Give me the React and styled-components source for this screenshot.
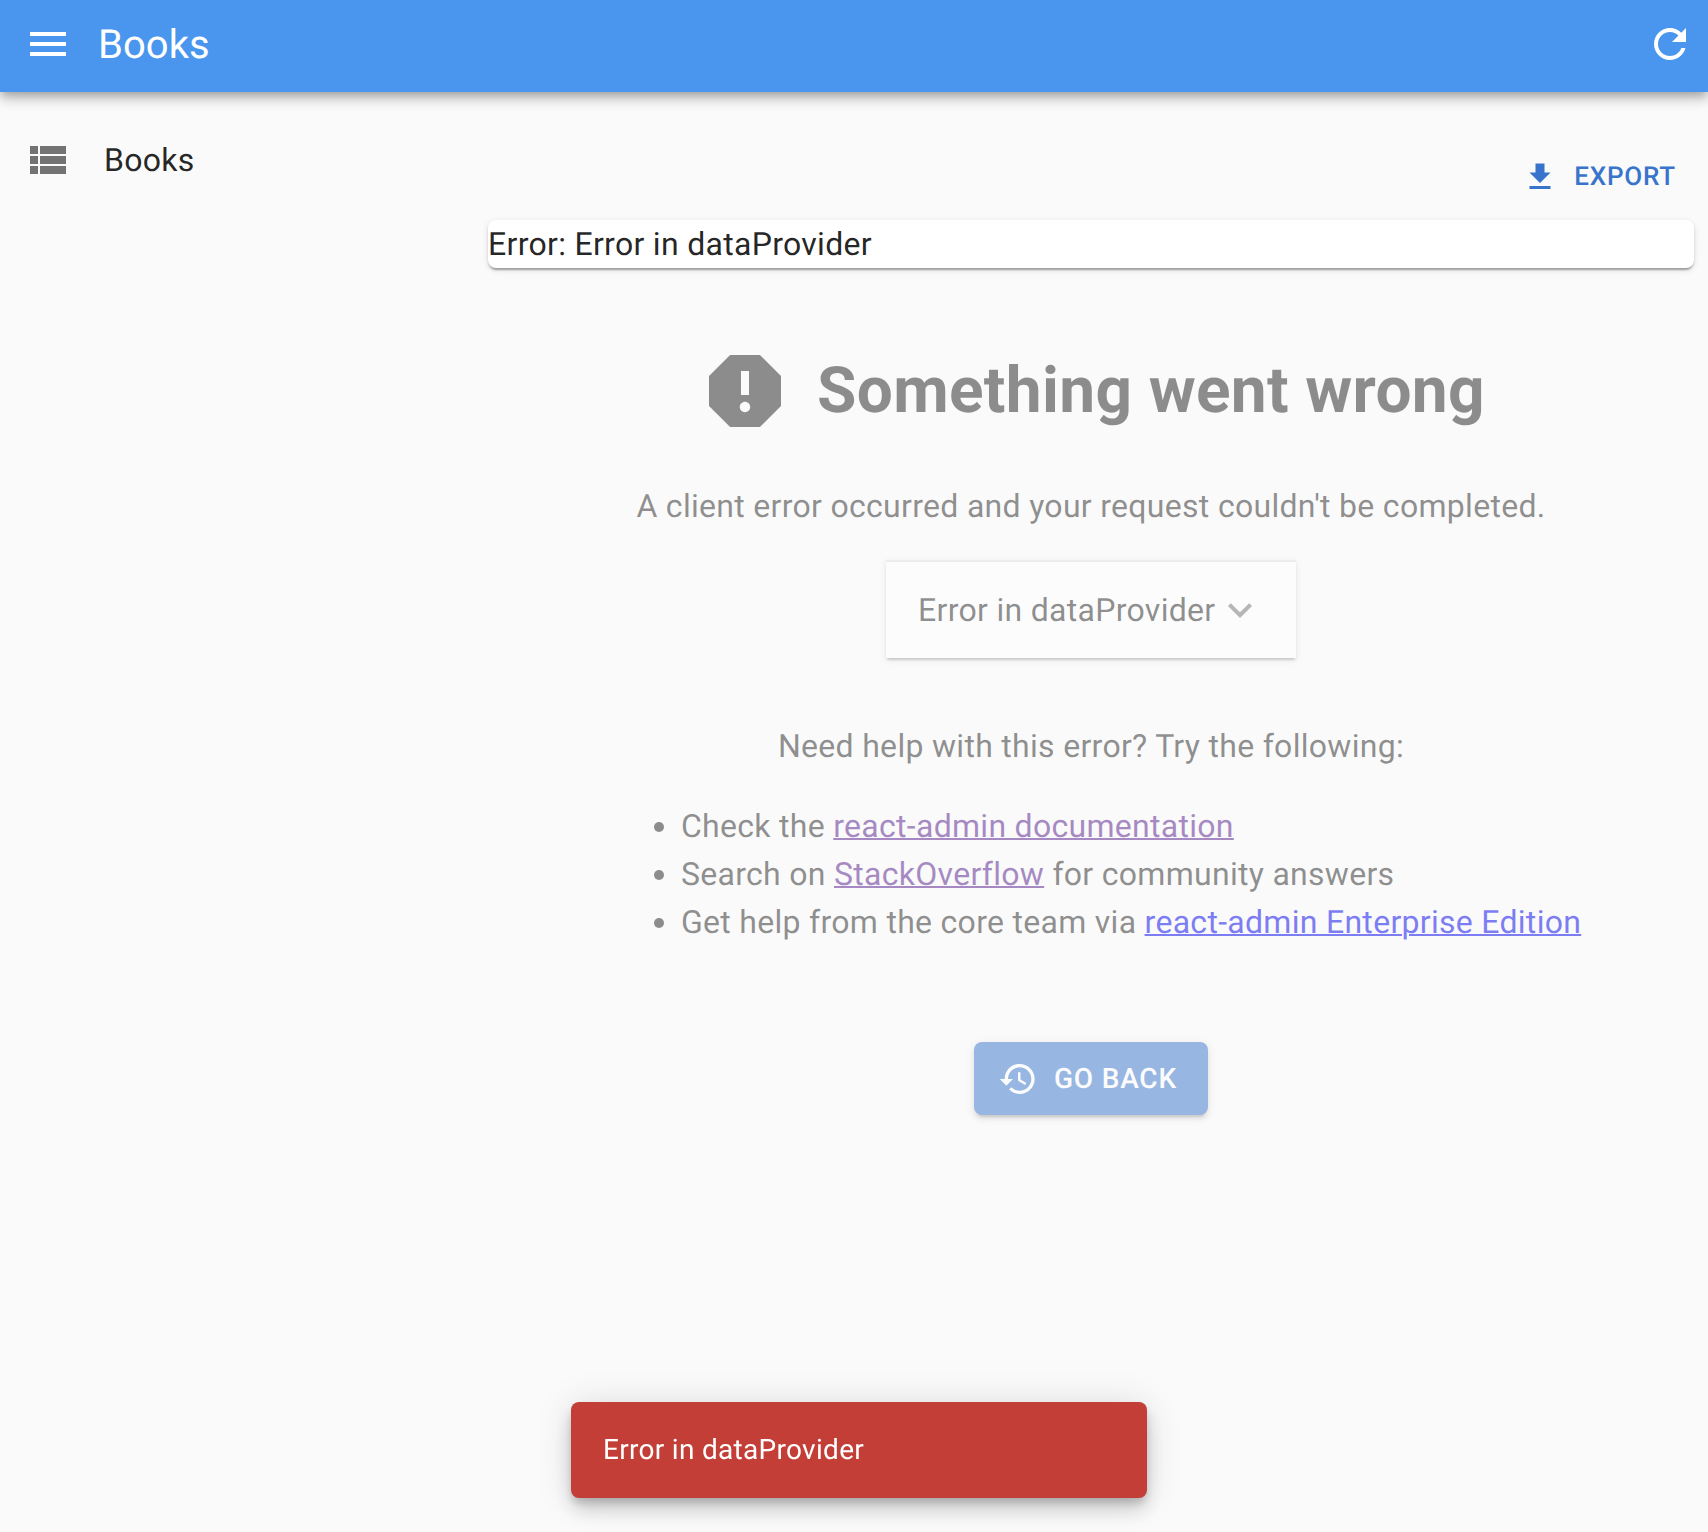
import React from "react";
import styled, { createGlobalStyle } from "styled-components";

const Global = createGlobalStyle`
  html, body { margin: 0; padding: 0; background: #fafafa; }
  body { font-family: Roboto, "Liberation Sans", sans-serif; color: rgba(0,0,0,.87); text-rendering: geometricPrecision; }
  * { box-sizing: border-box; }
`;

const Page = styled.div`
  height: 1532px;
  background: #fafafa;
  display: flex;
  flex-direction: column;
  overflow: hidden;
`;

const Header = styled.header`
  height: 92px;
  flex: none;
  display: flex;
  align-items: flex-start;
  padding: 20px 14px 0 24px;
  background: #4a96ee;
  color: #fff;
  box-shadow: 0 4px 8px -2px rgba(0,0,0,.2), 0 8px 10px 0 rgba(0,0,0,.14), 0 2px 20px 0 rgba(0,0,0,.12);
  position: relative;
  z-index: 2;
`;

const Icon = styled.svg`
  display: block;
  flex: none;
  width: ${(p) => p.$size || 48}px;
  height: ${(p) => p.$size || 48}px;
  fill: ${(p) => p.$color || "currentColor"};
`;

const Title = styled.div`
  flex: 1;
  margin-left: 26px;
  padding-top: 1px;
  font-size: 40px;
  line-height: 48px;
  font-weight: 400;
  letter-spacing: 0.05px;
`;

const Body = styled.div`
  flex: 1;
  display: flex;
  min-height: 0;
`;

const Sidebar = styled.nav`
  width: 488px;
  flex: none;
  padding-top: 44px;
`;

const MenuItem = styled.div`
  display: flex;
  align-items: center;
  height: 48px;
  padding-left: 24px;
  gap: 32px;
  font-size: 32px;
  letter-spacing: 0.3px;
  color: rgba(0,0,0,.87);
`;

const Content = styled.main`
  flex: 1;
  min-width: 0;
  padding-right: 14px;
`;

const Actions = styled.div`
  height: 128px;
  display: flex;
  justify-content: flex-end;
  align-items: flex-start;
  padding: 67px 18px 0 0;
`;

const ExportButton = styled.div`
  display: flex;
  align-items: center;
  gap: 16px;
  color: #3874cc;
  font-size: 26px;
  font-weight: 500;
  line-height: 36px;
  letter-spacing: 0.8px;
`;

const ErrorBar = styled.div`
  height: 48px;
  background: #fff;
  border-radius: 8px;
  font-size: 32px;
  line-height: 48px;
  letter-spacing: 0.3px;
  box-shadow: 0 4px 2px -2px rgba(0,0,0,.2), 0 2px 2px 0 rgba(0,0,0,.14), 0 2px 6px 0 rgba(0,0,0,.12);
`;

const Failure = styled.section`
  opacity: 0.5;
  display: flex;
  flex-direction: column;
  align-items: center;
  padding-top: 75px;
`;

const Heading = styled.h1`
  display: flex;
  align-items: center;
  gap: 24px;
  margin: 0;
  height: 96px;
  font-size: 64px;
  font-weight: 700;
  line-height: 96px;
  letter-spacing: 0.33px;
`;

const Summary = styled.p`
  margin: 43px 0 30px;
  font-size: 32px;
  line-height: 48px;
  letter-spacing: 0.3px;
`;

const Details = styled.div`
  width: 410px;
  height: 98px;
  display: flex;
  align-items: center;
  justify-content: space-between;
  padding: 0 32px;
  border-top: 2px solid rgba(0,0,0,.12);
  background: #fff;
  font-size: 32px;
  letter-spacing: 0.3px;
  box-shadow: 0 4px 2px -2px rgba(0,0,0,.2), 0 2px 2px 0 rgba(0,0,0,.14), 0 2px 6px 0 rgba(0,0,0,.12);
`;

const Chevron = styled(Icon)`
  fill: rgba(0,0,0,.54);
`;

const Help = styled.p`
  margin: 64px 0 32px;
  font-size: 32px;
  line-height: 48px;
  letter-spacing: 0.3px;
`;

const HelpList = styled.ul`
  margin: 0 0 96px;
  padding: 0 0 0 40px;
  align-self: flex-start;
  margin-left: 153px;
  font-size: 32px;
  line-height: 48px;
  letter-spacing: 0.29px;
`;

const VisitedLink = styled.a`
  color: #551a8b;
  text-decoration: underline;
  text-decoration-thickness: 2px;
`;

const FreshLink = styled.a`
  color: #0000ee;
  text-decoration: underline;
  text-decoration-thickness: 2px;
`;

const BackButton = styled.div`
  width: 234px;
  height: 73px;
  display: flex;
  align-items: center;
  gap: 16px;
  padding-left: 24px;
  border-radius: 8px;
  background: #3874cc;
  color: #fff;
  font-size: 28px;
  font-weight: 500;
  letter-spacing: 0.8px;
  box-shadow: 0 6px 2px -4px rgba(0,0,0,.2), 0 4px 4px 0 rgba(0,0,0,.14), 0 2px 10px 0 rgba(0,0,0,.12);
`;

const Snackbar = styled.div`
  position: fixed;
  left: 571px;
  top: 1402px;
  width: 576px;
  height: 96px;
  display: flex;
  align-items: center;
  padding: 0 32px 2px;
  border-radius: 8px;
  background: #c23e37;
  color: #fff;
  font-size: 28px;
  letter-spacing: 0.3px;
  box-shadow: 0 6px 10px -2px rgba(0,0,0,.2), 0 12px 20px 0 rgba(0,0,0,.14), 0 2px 36px 0 rgba(0,0,0,.12);
  z-index: 3;
`;

const P = ({ d, ...rest }) => (
  <Icon viewBox="0 0 24 24" aria-hidden="true" {...rest}>
    <path d={d} />
  </Icon>
);

export default function App() {
  return (
    <Page>
      <Global />
      <Header>
        <P d="M3 18h18v-2H3v2zm0-5h18v-2H3v2zm0-7v2h18V6H3z" />
        <Title>Books</Title>
        <P d="M17.65 6.35C16.2 4.9 14.21 4 12 4c-4.42 0-7.99 3.58-7.99 8s3.57 8 7.99 8c3.73 0 6.84-2.55 7.73-6h-2.08c-.82 2.33-3.04 4-5.65 4-3.31 0-6-2.69-6-6s2.69-6 6-6c1.66 0 3.14.69 4.22 1.78L13 11h7V4l-2.35 2.35z" />
      </Header>
      <Body>
        <Sidebar>
          <MenuItem>
            <P $color="rgba(0,0,0,.54)" d="M3 14h4v-4H3v4zm0 5h4v-4H3v4zM3 9h4V5H3v4zm5 5h13v-4H8v4zm0 5h13v-4H8v4zM8 5v4h13V5H8z" />
            Books
          </MenuItem>
        </Sidebar>
        <Content>
          <Actions>
            <ExportButton>
              <P $size={36} d="M19 9h-4V3H9v6H5l7 7 7-7zM5 18v2h14v-2H5z" />
              EXPORT
            </ExportButton>
          </Actions>
          <ErrorBar>Error: Error in dataProvider</ErrorBar>
          <Failure>
            <Heading>
              <P $size={96} d="M15.73 3H8.27L3 8.27v7.46L8.27 21h7.46L21 15.73V8.27L15.73 3zM12 17.3c-.72 0-1.3-.58-1.3-1.3 0-.72.58-1.3 1.3-1.3.72 0 1.3.58 1.3 1.3 0 .72-.58 1.3-1.3 1.3zm1-4.3h-2V7h2v6z" />
              Something went wrong
            </Heading>
            <Summary>A client error occurred and your request couldn't be completed.</Summary>
            <Details>
              Error in dataProvider
              <Chevron viewBox="0 0 24 24" aria-hidden="true">
                <path d="M16.59 8.59L12 13.17 7.41 8.59 6 10l6 6 6-6z" />
              </Chevron>
            </Details>
            <Help>Need help with this error? Try the following:</Help>
            <HelpList>
              <li>Check the <VisitedLink>react-admin documentation</VisitedLink></li>
              <li>Search on <VisitedLink>StackOverflow</VisitedLink> for community answers</li>
              <li>Get help from the core team via <FreshLink>react-admin Enterprise Edition</FreshLink></li>
            </HelpList>
            <BackButton>
              <P $size={40} d="M13 3c-4.97 0-9 4.03-9 9H1l3.89 3.89.07.14L9 12H6c0-3.87 3.13-7 7-7s7 3.13 7 7-3.13 7-7 7c-1.93 0-3.68-.79-4.94-2.06l-1.42 1.42C8.27 19.99 10.51 21 13 21c4.97 0 9-4.03 9-9s-4.03-9-9-9zm-1 5v5l4.28 2.54.72-1.21-3.5-2.08V8H12z" />
              GO BACK
            </BackButton>
          </Failure>
        </Content>
      </Body>
      <Snackbar>Error in dataProvider</Snackbar>
    </Page>
  );
}
